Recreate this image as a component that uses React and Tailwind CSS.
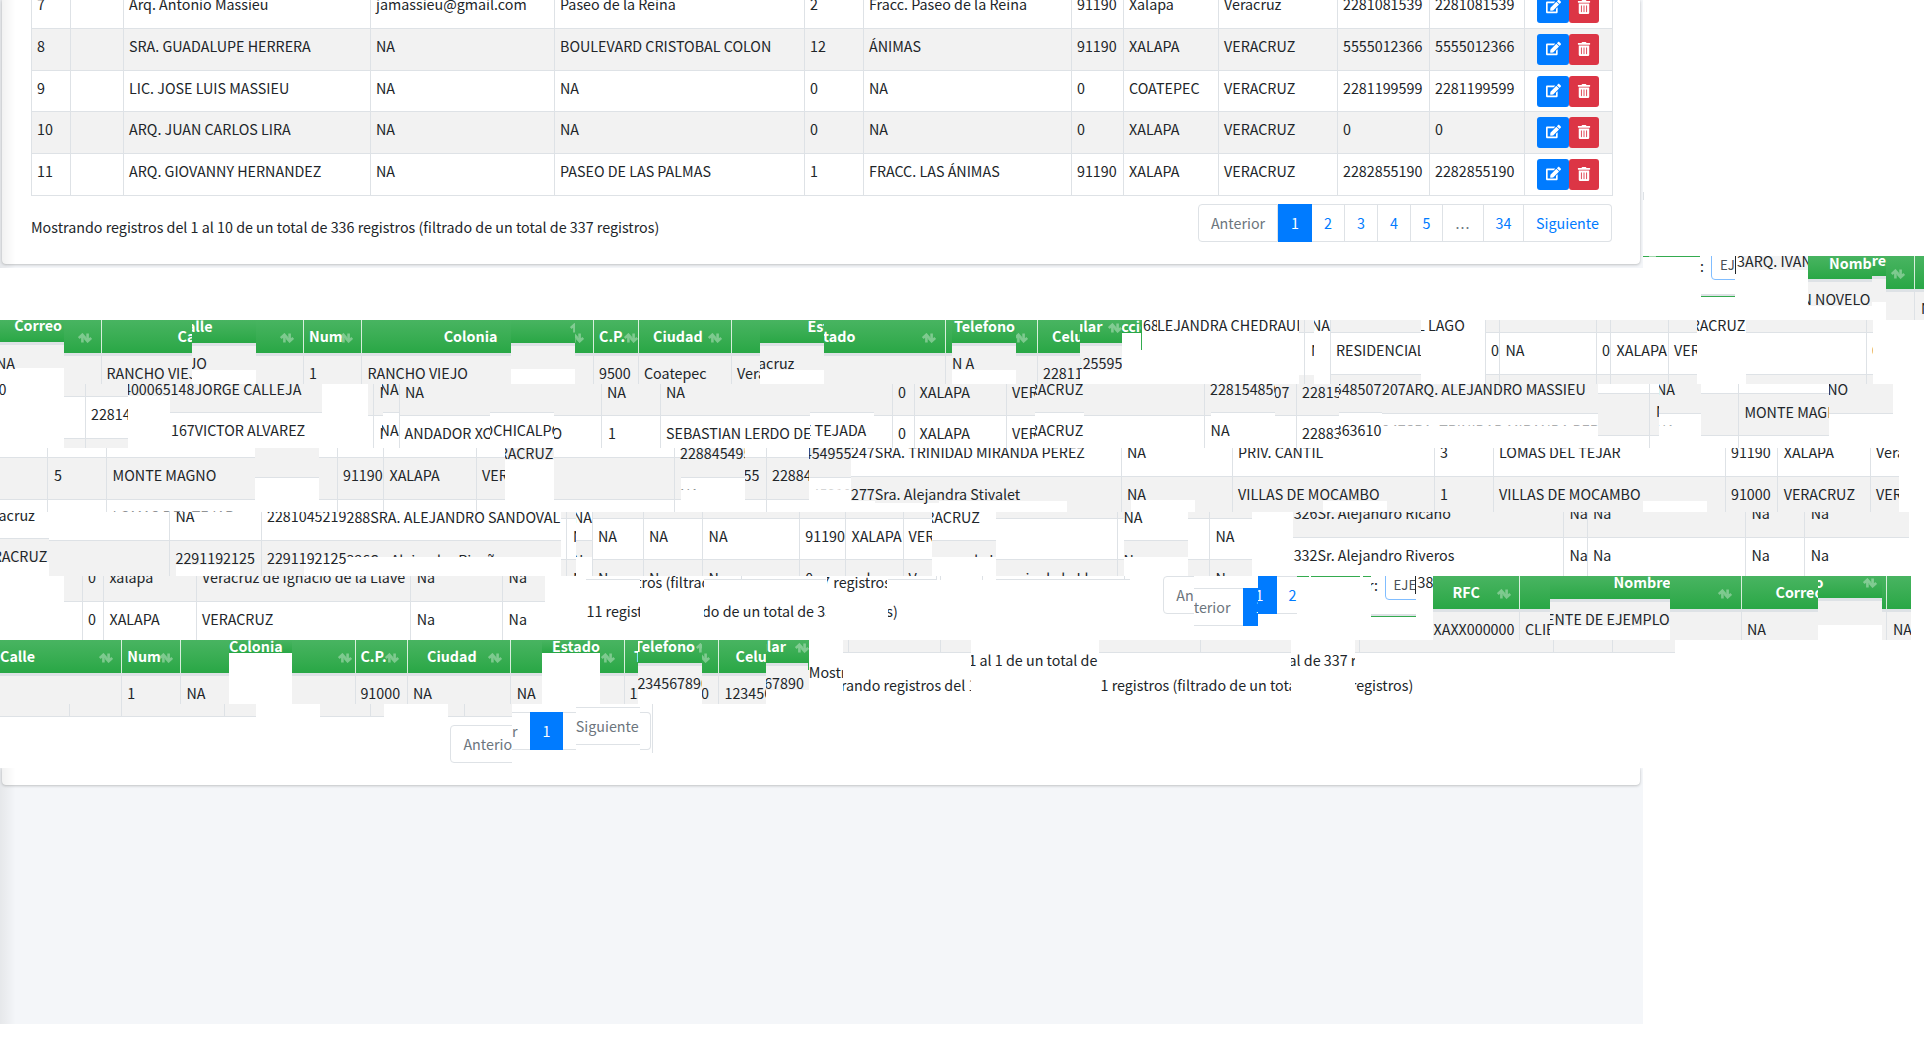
import React from "react";
import { FaEdit, FaTrashAlt } from "react-icons/fa";

const F = "bg-[#f2f2f2]";
const L = "bg-[#dee2e6]";
const W = "bg-white";
const G = "bg-linear-to-b from-[#48b461] to-[#28a745]";
const BLUE = "bg-[#007bff]";
const GL = "bg-[#34ab4f]";

/* ---------- free-canvas primitives ---------- */

const box = (x1, x2, y1, y2, cls) => ({ k: "box", x1, x2, y1, y2, cls });

/* vertical stack of fills: stack(x1, x2, top, fill, bottom, fill, bottom ...) */
const stack = (x1, x2, top, ...rest) => {
  const out = [];
  let y = top;
  for (let i = 0; i < rest.length; i += 2) {
    out.push(box(x1, x2, y, rest[i + 1], rest[i]));
    y = rest[i + 1];
  }
  return out;
};
const cols = (y1, y2, cls, ...xs) => xs.map((x) => box(x, x + 1, y1, y2, cls));
const txt = (x, y, s, clip = {}, cls = "text-[#212529]") => ({ k: "txt", x, y, s, clip, cls });
const head = (x, y, s, clip = {}) => txt(x, y - 0.5, s, clip, "font-bold text-white");
const sort = (x, y, clip = {}) => ({ k: "sort", x, y, clip });

function SortIcon() {
  return (
    <svg viewBox="0 0 14 10" className="block h-[10px] w-[14px] opacity-35" fill="none" stroke="white" strokeWidth="2.6">
      <path d="M4.4 9.5V1.5M0.8 5L4.4 1.7L7.4 5" />
      <path d="M9.6 0.5V8.5M6.6 5L9.6 8.3L13.2 5" />
    </svg>
  );
}

function Clipped({ item, band, children, top }) {
  const { l = item.x - 2, r = 1930, t = band.y, b = band.y + band.h } = item.clip;
  return (
    <div
      className="absolute overflow-hidden"
      style={{ left: l - band.x, top: t - band.y, width: r - l, height: b - t }}
    >
      <div className="absolute" style={{ left: item.x - l, top: top - t }}>
        {children}
      </div>
    </div>
  );
}

function Band({ x = 0, y, h = 64, items }) {
  const band = { x, y, h };
  return (
    <div className="relative overflow-hidden bg-white" style={{ height: h }}>
      {items.flat(3).map((it, i) => {
        if (it.k === "box")
          return (
            <div
              key={i}
              className={"absolute " + it.cls}
              style={{ left: it.x1 - x, top: it.y1 - y, width: it.x2 - it.x1, height: it.y2 - it.y1 }}
            />
          );
        if (it.k === "sort")
          return (
            <Clipped key={i} item={it} band={band} top={it.y - 5}>
              <SortIcon />
            </Clipped>
          );
        return (
          <Clipped key={i} item={it} band={band} top={it.y - 11}>
            <span className={"block whitespace-pre leading-5 " + it.cls}>{it.s}</span>
          </Clipped>
        );
      })}
    </div>
  );
}

/* ---------- main table ---------- */

const ROWS = [
  ["7", "", "Arq. Antonio Massieu", "jamassieu@gmail.com", "Paseo de la Reina", "2", "Fracc. Paseo de la Reina", "91190", "Xalapa", "Veracruz", "2281081539", "2281081539"],
  ["8", "", "SRA. GUADALUPE HERRERA", "NA", "BOULEVARD CRISTOBAL COLON", "12", "ÁNIMAS", "91190", "XALAPA", "VERACRUZ", "5555012366", "5555012366"],
  ["9", "", "LIC. JOSE LUIS MASSIEU", "NA", "NA", "0", "NA", "0", "COATEPEC", "VERACRUZ", "2281199599", "2281199599"],
  ["10", "", "ARQ. JUAN CARLOS LIRA", "NA", "NA", "0", "NA", "0", "XALAPA", "VERACRUZ", "0", "0"],
  ["11", "", "ARQ. GIOVANNY HERNANDEZ", "NA", "PASEO DE LAS PALMAS", "1", "FRACC. LAS ÁNIMAS", "91190", "XALAPA", "VERACRUZ", "2282855190", "2282855190"],
];

function MainTable() {
  return (
    <div className="-mt-[13px] ml-[29px] grid w-[1582px] grid-rows-[42px_42px_41px_42px_42px] border-l border-[#dee2e6]">
      {ROWS.map((r, i) => (
        <div
          key={r[0]}
          className={
            "grid grid-cols-[39px_53px_247px_184px_250px_59px_208px_52px_95px_119px_92px_95px_88px] border-b border-[#dee2e6] " +
            (i % 2 ? "bg-[#f2f2f2]" : "bg-white")
          }
        >
          {r.map((c, j) => (
            <div key={j} className="whitespace-nowrap border-r border-[#dee2e6] pl-[5px] pt-[7px] leading-5">
              {c}
            </div>
          ))}
          <div className="flex border-r border-[#dee2e6] pl-[12px] pt-[5px]">
            <span className="flex h-[31px] w-[32px] items-center justify-center rounded-[3px] bg-[#007bff] pb-[2px] text-white">
              <FaEdit size={15} />
            </span>
            <span className="flex h-[31px] w-[30px] items-center justify-center rounded-[3px] bg-[#dc3545] pb-[2px] text-white">
              <FaTrashAlt size={14} />
            </span>
          </div>
        </div>
      ))}
    </div>
  );
}

function Pagination() {
  const cell = "flex h-[38px] items-center justify-center border-y border-r border-[#dee2e6] ";
  const link = cell + "text-[#007bff]";
  const mute = cell + "text-[#6c757d]";
  return (
    <div className="flex">
      <span className={mute + " w-[80px] rounded-l border-l"}>Anterior</span>
      <span className="flex h-[38px] w-[34px] items-center justify-center bg-[#007bff] text-white">1</span>
      <span className={link + " w-[33px]"}>2</span>
      <span className={link + " w-[33px]"}>3</span>
      <span className={link + " w-[33px]"}>4</span>
      <span className={link + " w-[32px]"}>5</span>
      <span className={mute + " w-[41px] tracking-[1px]"}>...</span>
      <span className={link + " w-[40px]"}>34</span>
      <span className={link + " w-[88px] rounded-r"}>Siguiente</span>
    </div>
  );
}

/* ---------- fragment data ---------- */

const FIELD = "text-[13.2px] text-[#495057]";

const band1 = [
  box(1643, 1644, 192, 200, L),
  box(1643, 1700, 256, 257, GL),
  box(1649, 1656, 256, 257, "bg-[#a3d9af]"),
  txt(1700, 267, ":", { l: 1699 }),
  box(1711, 1745, 240, 280, "rounded border border-[#80bdff] bg-white"),
  box(1735, 1750, 240, 281, W),
  box(1640, 1930, 190, 192, W),
  box(1701, 1735, 294, 296, L),
  box(1701, 1735, 296, 297, GL),
  box(1700, 1808, 230, 256, W),
  box(1743, 1808, 256, 270, F),
  txt(1720, 266, "EJ", { r: 1735 }, FIELD),
  box(1735, 1736, 256, 274, "bg-[#212529]"),
  txt(1737, 262, "3ARQ. IVAN", { r: 1808, t: 256 }),
  stack(1808, 1872, 256, G, 279, L, 282, F, 306),
  stack(1872, 1886, 256, G, 276, L, 279, F, 302),
  stack(1886, 1924, 256, G, 289, L, 292, F, 320),
  cols(256, 289, "bg-white/80", 1914),
  cols(292, 320, L, 1914),
  head(1829, 264, "Nombre", { r: 1872 }),
  head(1829, 261, "Nombre", { l: 1872, t: 256 }),
  sort(1891, 274),
  txt(1801.5, 300, "N NOVELO", { l: 1808 }),
  txt(1921, 309, "NA", { r: 1924 }),
];

const band2 = [
  stack(0, 64, 320, G, 342, L, 345, F, 368),
  stack(64, 1080, 320, G, 353, L, 356, F, 384),
  cols(320, 353, "bg-white/80", 101, 303, 361, 593, 638, 731, 945, 1037),
  cols(356, 384, L, 101, 303, 361, 593, 638, 731, 945, 1037),
  stack(192, 256, 320, G, 343, L, 346, F, 370, W, 384),
  stack(511, 575, 320, G, 343, L, 346, F, 369, W, 384),
  stack(760, 824, 320, G, 343, L, 346, F, 370, W, 384),
  stack(952, 1016, 320, G, 343, L, 346, F, 370, W, 384),
  stack(1080, 1122, 320, G, 343, L, 346, F, 370, W, 384),
  box(1122, 1142, 320, 333, G),
  box(1141, 1142, 333, 350, GL),
  head(14.2, 326.5, "Correo", { r: 64 }),
  sort(78, 338),
  head(177.5, 337.5, "Calle", { r: 192 }),
  head(177.5, 327.5, "Calle", { l: 192 }),
  sort(280, 338),
  head(309, 337.5, "Num"),
  sort(339, 338),
  head(443.7, 337.5, "Colonia"),
  sort(570, 328, { r: 575 }),
  sort(570, 338, { l: 575 }),
  head(599, 337.5, "C.P."),
  sort(624, 338),
  head(653, 337.5, "Ciudad"),
  sort(708, 338),
  head(807.5, 327.5, "Estado", { r: 824 }),
  head(807.5, 337.5, "Estado", { l: 824 }),
  sort(922, 338),
  head(954, 327.5, "Telefono", { r: 1016 }),
  sort(1014, 338, { l: 1016 }),
  head(1052, 337.5, "Celular", { r: 1080 }),
  head(1052, 327.5, "Celular", { l: 1080, r: 1122 }),
  sort(1108, 328, { r: 1122 }),
  head(1112, 327.5, "Accion", { l: 1122, r: 1141 }),
  txt(-4, 363.5, "NA", { l: 0 }),
  txt(106.5, 374, "RANCHO VIEJO", { r: 192 }),
  txt(106.5, 364, "RANCHO VIEJO", { l: 192 }),
  txt(309, 374, "1"),
  txt(367.5, 374, "RANCHO VIEJO"),
  txt(599, 374, "9500"),
  txt(644, 374, "Coatepec"),
  txt(737, 374, "Veracruz", { r: 760 }),
  txt(737, 364, "Veracruz", { l: 760 }),
  txt(952, 364, "N A"),
  txt(1043, 374, "2281125595", { r: 1080 }),
  txt(1043, 364, "2281125595", { l: 1080, r: 1122 }),
  stack(1299, 1314, 320, F, 332, L, 333, W, 375, F, 384),
  cols(320, 384, L, 1304),
  stack(1331, 1421, 320, F, 332, L, 333, W, 374, L, 375, F, 384),
  stack(1486, 1697, 320, F, 332, L, 333, W, 374, L, 375, F, 384),
  stack(1746, 1873, 320, F, 332, L, 333, W, 374, L, 375, F, 384),
  cols(320, 384, L, 1330, 1485, 1499, 1596, 1610, 1668, 1866),
  txt(1143, 326, "68", { r: 1157 }),
  txt(1157, 326, "LEJANDRA CHEDRAUI", { r: 1299, l: 1156 }),
  txt(1311, 326, "NA", { l: 1314 }),
  txt(1311, 351, "NA", { l: 1310, r: 1314 }),
  txt(1336, 351, "RESIDENCIAL", { r: 1421 }),
  txt(1417, 326, "L LAGO", { l: 1421 }),
  txt(1491, 351, "0"),
  txt(1505.5, 351, "NA"),
  txt(1602, 351, "0"),
  txt(1616.6, 351, "XALAPA"),
  txt(1674, 351, "VERACRUZ", { r: 1697 }),
  txt(1674, 326, "VERACRUZ", { l: 1697 }),
  txt(1872, 351, "0", { r: 1873 }),
];

const band3 = [
  stack(64, 128, 384, F, 396, L, 397, W, 438, L, 439, F, 448),
  cols(384, 448, L, 85),
  box(128, 170, 384, 396, F),
  stack(170, 322, 384, F, 412, L, 413),
  stack(368, 383, 384, F, 415, L, 416),
  stack(383, 399, 384, F, 412, L, 413),
  cols(384, 448, L, 373),
  stack(399, 1397, 384, F, 415, L, 416),
  stack(490, 554, 384, F, 412, L, 413, W, 420),
  stack(810, 874, 384, F, 412, L, 413, W, 420),
  stack(1035, 1084, 384, F, 412, L, 413, W, 420),
  stack(1211, 1275, 384, F, 412, L, 413, W, 420),
  cols(384, 448, L, 399, 601, 660, 892, 914, 1006, 1204, 1296),
  box(1339, 1382, 384, 448, W),
  stack(1339, 1382, 384, F, 412, L, 413),
  stack(1382, 1598, 384, F, 413, L, 414, W, 448),
  stack(1598, 1659, 384, W, 393, L, 394, F, 435, L, 436, W, 448),
  cols(384, 448, L, 1649),
  stack(1659, 1701, 384, F, 413, L, 414, W, 448),
  stack(1701, 1829, 384, W, 393, L, 394, F, 435, L, 436, W, 448),
  cols(384, 448, L, 1738),
  stack(1829, 1893, 384, F, 413, L, 414, W, 448),
  txt(-1.5, 390, "0", { l: 0 }),
  txt(91, 415, "2281400065", { r: 128 }),
  txt(123, 390, "400065148JORGE CALLEJA", { l: 128 }),
  txt(171, 431, "167VICTOR ALVAREZ"),
  txt(379.6, 393, "NA", { r: 383 }),
  txt(379.6, 390, "NA", { l: 382 }),
  txt(379.6, 434, "NA", { r: 383 }),
  txt(379.6, 431, "NA", { l: 382 }),
  txt(405, 393, "NA"),
  txt(404.5, 434, "ANDADOR XOCHICALPO", { r: 490 }),
  txt(404.5, 431, "ANDADOR XOCHICALPO", { l: 490, r: 554 }),
  txt(404.5, 434, "ANDADOR XOCHICALPO", { l: 554 }),
  txt(607, 393, "NA"),
  txt(608, 434, "1"),
  txt(666, 393, "NA"),
  txt(666, 434, "SEBASTIAN LERDO DE TEJADA", { r: 810 }),
  txt(666, 431, "SEBASTIAN LERDO DE TEJADA", { l: 810 }),
  txt(898, 393, "0"),
  txt(898, 434, "0"),
  txt(919.6, 393, "XALAPA"),
  txt(919.6, 434, "XALAPA"),
  txt(1012, 393, "VERACRUZ", { r: 1035 }),
  txt(1012, 434, "VERACRUZ", { r: 1035 }),
  txt(1012, 390, "VERACRUZ", { l: 1035 }),
  txt(1012, 431, "VERACRUZ", { l: 1035 }),
  txt(1210, 390, "2281548507", { r: 1275 }),
  txt(1210, 393, "2281548507", { l: 1275 }),
  txt(1210.6, 431, "NA"),
  txt(1302, 393, "2281548507", { r: 1339 }),
  txt(1302, 434, "2288363610", { r: 1339 }),
  txt(1302, 390, "2281548507", { l: 1339, r: 1382 }),
  txt(1302, 431, "2288363610", { l: 1339, r: 1382 }),
  txt(1382, 390, "207ARQ. ALEJANDRO MASSIEU"),
  txt(1382, 431, "247SRA. TRINIDAD MIRANDA PEREZ", { r: 1598, b: 425.5 }, "text-[#212529]/40"),
  txt(1656, 412, "NA", { r: 1659 }),
  txt(1656, 390, "NA", { l: 1659 }),
  txt(1656, 431, "NA", { l: 1659, b: 425.5 }, "text-[#212529]/40"),
  txt(1744.4, 412.5, "MONTE MAGNO", { r: 1829 }),
  txt(1744.4, 390, "MONTE MAGNO", { l: 1829 }),
];

const band4 = [
  stack(0, 809, 448, W, 457, L, 458, F, 499, L, 500, W, 512),
  cols(448, 512, L, 47, 106, 337, 383, 476, 674, 766),
  stack(255, 319, 448, F, 477, L, 478, W, 512),
  stack(505, 554, 448, F, 460, W, 512),
  stack(681, 745, 448, F, 477, L, 478, W, 512),
  stack(809, 851, 448, F, 477, L, 478, W, 512),
  stack(851, 1899, 448, W, 476, L, 477, F, 512),
  cols(448, 512, L, 1121, 1232, 1434, 1493, 1725, 1777, 1870),
  box(875, 939, 503, 512, W),
  box(851, 875, 501, 512, W),
  box(939, 1067, 501, 512, W),
  box(1131, 1195, 500, 512, W),
  box(1323, 1387, 501, 512, W),
  box(1643, 1707, 501, 512, W),
  txt(54, 476, "5"),
  txt(54, 518, "1", {}, "text-[#212529]/50"),
  txt(112.6, 476, "MONTE MAGNO"),
  txt(112.6, 517, "LOMAS DEL TEJAR", {}, "text-[#212529]/50"),
  txt(343, 476, "91190"),
  txt(389.4, 476, "XALAPA"),
  txt(482, 476, "VERACRUZ", { r: 505 }),
  txt(482, 454, "VERACRUZ", { l: 505, r: 554 }),
  txt(680, 454, "2288454955", { r: 745 }),
  txt(680, 476, "2288454955", { l: 745 }),
  txt(680, 495, "NA", { r: 745, b: 490 }, "text-[#212529]/50"),
  txt(772, 476, "2288454955", { r: 809 }),
  txt(772, 454, "2288454955", { l: 809, r: 851 }),
  txt(772, 495, "2281045219", { l: 815, r: 851, b: 490 }, "text-[#212529]/20"),
  txt(851, 453, "247SRA. TRINIDAD MIRANDA PEREZ"),
  txt(851, 495, "277Sra. Alejandra Stivalet"),
  txt(1127, 453, "NA"),
  txt(1127, 495, "NA"),
  txt(1238, 453, "PRIV. CANTIL"),
  txt(1238, 495, "VILLAS DE MOCAMBO"),
  txt(1440, 453, "3"),
  txt(1440, 495, "1"),
  txt(1499, 453, "LOMAS DEL TEJAR"),
  txt(1499, 495, "VILLAS DE MOCAMBO"),
  txt(1731, 453, "91190"),
  txt(1731, 495, "91000"),
  txt(1783.7, 453, "XALAPA"),
  txt(1783.7, 495, "VERACRUZ"),
  txt(1876, 453, "Veracruz", { r: 1899 }),
  txt(1876, 495, "VERACRUZ", { r: 1899 }),
];

const band5 = [
  stack(0, 49, 512, W, 538, L, 539, F, 562),
  stack(49, 561, 512, W, 540, L, 541, F, 576),
  cols(512, 576, L, 169, 261),
  box(176, 240, 565, 576, W),
  box(304, 561, 557, 576, W),
  stack(561, 576, 512, F, 518, L, 519, W, 559, L, 560, F, 576),
  cols(512, 576, L, 566),
  stack(576, 592, 512, W, 540, L, 541, F, 557),
  stack(592, 932, 512, F, 518, L, 519, W, 559, L, 560, F, 576),
  cols(512, 576, L, 592, 643, 702, 799, 845, 903),
  stack(932, 996, 512, W, 540, L, 541, F, 557),
  stack(996, 1124, 512, F, 518, L, 519, W, 559, L, 560, F, 576),
  cols(512, 576, L, 1117),
  stack(1124, 1188, 512, W, 540, L, 541, F, 557),
  stack(1188, 1252, 512, F, 518, L, 519, W, 559, L, 560, F, 576),
  cols(512, 576, L, 1209),
  stack(1293, 1909, 512, F, 537, L, 538, W, 576),
  cols(512, 576, L, 1563, 1587, 1745, 1804),
  txt(-22.5, 515.5, "Veracruz", { l: 0 }),
  txt(-24, 557, "VERACRUZ", { l: 0, r: 49 }),
  txt(175.5, 517, "NA"),
  txt(175.5, 559, "2291192125"),
  txt(267, 517, "2281045219"),
  txt(267, 559, "2291192125"),
  txt(346.5, 518, "288SRA. ALEJANDRO SANDOVAL"),
  txt(346.5, 560.5, "326Sr. Alejandro Ricaño", { b: 557 }),
  txt(573, 537, "NA", { r: 576 }),
  txt(573, 579, "Na", { r: 576 }),
  txt(573, 518, "NA", { l: 576 }),
  txt(573, 560.5, "Na", { l: 576, b: 557 }),
  txt(598, 537, "NA"),
  txt(649, 537, "NA"),
  txt(708.6, 537, "NA"),
  txt(805.3, 537, "91190"),
  txt(851.4, 537, "XALAPA"),
  txt(908.6, 537, "VERACRUZ", { r: 932 }),
  txt(908.6, 518, "VERACRUZ", { l: 932 }),
  txt(598, 579, "Na"),
  txt(649, 579, "Na"),
  txt(708.6, 579, "Na"),
  txt(805.3, 579, "0"),
  txt(851.4, 579, "xalapa"),
  txt(908.6, 579, "Veracruz de Ignacio de la Llave", { r: 932 }),
  txt(908.6, 560.5, "Veracruz de Ignacio de la Llave", { l: 932, r: 996, b: 557 }),
  txt(908.6, 579, "Veracruz de Ignacio de la Llave", { l: 996 }),
  txt(1123.5, 518, "NA"),
  txt(1123.5, 560.5, "Na", { b: 557 }),
  txt(1215.5, 537, "NA"),
  txt(1215.5, 579, "Na"),
  txt(1293.7, 514, "326Sr. Alejandro Ricaño"),
  txt(1293.7, 556, "332Sr. Alejandro Riveros"),
  txt(1569.4, 514, "Na"),
  txt(1569.4, 556, "Na"),
  txt(1593, 514, "Na"),
  txt(1593, 556, "Na"),
  txt(1751.4, 514, "Na"),
  txt(1751.4, 556, "Na"),
  txt(1810.7, 514, "Na"),
  txt(1810.7, 556, "Na"),
];

const FOOT = "11 registros (filtrado de un total de 337 registros)";
const GREY = "text-[#6c757d]";

const band6 = [
  stack(64, 545, 576, F, 601, L, 602, W, 640),
  cols(576, 640, L, 82, 103, 196, 410, 502),
  txt(88, 578, "0"),
  txt(109.4, 578, "xalapa"),
  txt(202, 578, "Veracruz de Ignacio de la Llave"),
  txt(416.7, 578, "Na"),
  txt(508.6, 578, "Na"),
  txt(88, 620, "0"),
  txt(109.4, 620, "XALAPA"),
  txt(202, 620, "VERACRUZ"),
  txt(416.7, 620, "Na"),
  txt(508.6, 620, "Na"),
  box(586, 640, 579, 580, L),
  box(704, 826, 579, 580, L),
  box(888, 936, 579, 580, L),
  box(996, 1130, 579, 580, L),
  cols(576, 580, L, 741, 936, 940, 982, 1124),
  txt(586.5, 612, FOOT, { r: 640 }),
  txt(585.5, 583, FOOT, { l: 640, r: 704 }),
  txt(586, 612, FOOT, { l: 704, r: 826 }),
  txt(575, 583, FOOT, { l: 827, r: 887 }),
  txt(577, 612, FOOT, { l: 888 }),
  box(1163, 1200, 576, 614, "rounded-l border border-[#dee2e6]"),
  box(1194, 1243, 576, 640, W),
  box(1194, 1243, 588, 589, L),
  box(1194, 1243, 625, 626, L),
  box(1243, 1258, 588, 626, BLUE),
  box(1258, 1277, 576, 614, BLUE),
  box(1277, 1297, 576, 577, L),
  box(1277, 1297, 613, 614, L),
  txt(1176.3, 596, "Anterior", { r: 1194 }, GREY),
  txt(1176.3, 608, "Anterior", { l: 1194, r: 1243 }, GREY),
  txt(1255.5, 596, "1", { l: 1258 }, "text-white"),
  txt(1255.5, 608, "1", { r: 1258 }, "text-white"),
  txt(1288.5, 596, "2", { r: 1297 }, "text-[#007bff]"),
  box(1297, 1371, 576, 577, GL),
  box(1309, 1311, 576, 577, W),
  box(1360, 1363, 576, 577, W),
  txt(1368, 586, "r:", { l: 1371 }),
  box(1385, 1430, 560, 600, "rounded border border-[#80bdff] bg-white"),
  box(1416, 1433, 576, 602, W),
  txt(1393.6, 586, "EJE", { r: 1416 }, FIELD),
  box(1415, 1416, 576, 594, "bg-[#212529]"),
  box(1371, 1416, 614, 616, L),
  box(1371, 1416, 616, 617, GL),
  txt(1417.6, 582.5, "38", { r: 1433 }),
  stack(1433, 1911, 576, G, 609, L, 612, F, 640),
  cols(576, 609, "bg-white/80", 1519, 1741, 1886),
  cols(612, 640, L, 1519, 1741, 1886),
  stack(1550, 1670, 576, G, 599, L, 602, F, 626, W, 640),
  stack(1818, 1882, 576, G, 598, L, 601, F, 625, W, 640),
  head(1452.5, 593.5, "RFC"),
  sort(1497, 594),
  head(1613.5, 583.5, "Nombre", { r: 1670 }),
  sort(1718, 594),
  head(1775.5, 593.5, "Correo", { r: 1818 }),
  head(1775.5, 583.5, "Correo", { l: 1818 }),
  sort(1863, 583),
  txt(1433.4, 629.5, "XAXX000000"),
  txt(1525, 629.5, "CLIENTE DE EJEMPLO", { r: 1550 }),
  txt(1525, 620, "CLIENTE DE EJEMPLO", { l: 1550, r: 1670 }),
  txt(1747, 629.5, "NA"),
  txt(1893, 629.5, "NA", { r: 1911 }),
];

const INFO = "Mostrando registros del 1 al 1 de un total de 1 registros (filtrado de un total de 337 registros)";

const band7 = [
  stack(0, 766, 640, G, 673, L, 676, F, 704),
  cols(640, 673, "bg-white/80", 121, 180, 355, 407, 510, 624, 718),
  cols(676, 704, L, 121, 180, 355, 407, 510, 624, 718),
  stack(229, 292, 640, G, 653, W, 704),
  stack(542, 600, 640, G, 653, W, 704),
  stack(638, 702, 640, G, 663, L, 666, F, 690, W, 704),
  stack(766, 809, 640, G, 663, L, 666, F, 690, W, 704),
  box(808, 809, 663, 670, GL),
  head(0, 657.5, "Calle"),
  sort(99, 658),
  head(127.3, 657.5, "Num"),
  sort(159, 658),
  head(229, 647.5, "Colonia"),
  sort(338, 658),
  head(360.4, 657.5, "C.P."),
  sort(385, 658),
  head(427, 657.5, "Ciudad"),
  sort(488, 658),
  head(552, 647.5, "Estado"),
  sort(601, 658),
  head(634, 657.5, "Telefono", { r: 638 }),
  head(634, 647.5, "Telefono", { l: 638, r: 702 }),
  sort(696, 648, { r: 702 }),
  sort(696, 658, { l: 702 }),
  head(735.5, 657.5, "Celular", { r: 766 }),
  head(735.5, 647.5, "Celular", { l: 766 }),
  sort(795, 648),
  txt(127.3, 694, "1"),
  txt(186.5, 694, "NA"),
  txt(360.4, 694, "91000"),
  txt(413, 694, "NA"),
  txt(516.7, 694, "NA"),
  txt(629.5, 694, "1234567890", { r: 638 }),
  txt(629.5, 684, "1234567890", { l: 638, r: 702 }),
  txt(629.5, 694, "1234567890", { l: 702 }),
  txt(724.5, 694, "1234567890", { r: 766 }),
  txt(724.5, 684, "1234567890", { l: 766 }),
  stack(843, 971, 640, F, 652, L, 653),
  stack(1099, 1291, 640, F, 652, L, 653),
  stack(1355, 1675, 640, F, 652, L, 653),
  cols(640, 652, L, 848, 940, 1200, 1359, 1553, 1612),
  txt(808.8, 673, INFO, { r: 843 }),
  txt(808.8, 686, INFO, { l: 843, r: 971 }),
  txt(808.8, 661, INFO, { l: 971, r: 1099 }),
  txt(808.8, 686, INFO, { l: 1099, r: 1291 }),
  txt(808.8, 661, INFO, { l: 1291, r: 1355 }),
  txt(808.8, 686, INFO, { l: 1355 }),
];

const band8 = [
  stack(0, 512, 704, F, 716, L, 717),
  cols(704, 717, L, 69, 121, 224, 370, 464),
  box(256, 320, 704, 717, W),
  box(384, 448, 704, 717, W),
  box(450, 520, 725, 763, "rounded-l border border-[#dee2e6]"),
  box(512, 640, 704, 768, W),
  box(512, 576, 712, 713, L),
  box(512, 576, 749, 750, L),
  box(530, 563, 712, 750, BLUE),
  box(576, 640, 707, 708, L),
  box(576, 640, 744, 745, L),
  box(640, 651, 712, 750, "rounded-r border-y border-r border-[#dee2e6]"),
  box(652, 653, 704, 753, L),
  txt(463.4, 745, "Anterior", { r: 512 }, GREY),
  txt(463.4, 732, "Anterior", { l: 512 }, GREY),
  txt(542.5, 732, "1", {}, "text-white"),
  txt(575.8, 727, "Siguiente", {}, GREY),
];

const CARD_SHADOW = "shadow-[0_0_1px_rgba(0,0,0,0.125),0_1px_3px_rgba(0,0,0,0.2)]";

function SideShade() {
  return <div className="pointer-events-none absolute inset-y-0 left-0 w-[16px] bg-linear-to-r from-black/6 to-transparent" />;
}

export default function App() {
  return (
    <div className="h-[1050px] w-[1930px] overflow-hidden bg-white font-['Noto_Sans_CJK_SC','Noto_Sans',sans-serif] text-[14.31px] text-[#212529]">
      <div className="flex h-[320px]">
        <section className="relative h-[268px] w-[1643px] overflow-hidden bg-[#f4f6f9] pl-[2px]">
          <div className={"h-[264px] w-[1638px] overflow-hidden rounded-b bg-white " + CARD_SHADOW}>
            <MainTable />
            <div className="ml-[29px] mr-[28px] mt-[8px] flex items-start justify-between">
              <span className="pt-[13px] leading-5">
                Mostrando registros del 1 al 10 de un total de 336 registros (filtrado de un total de 337 registros)
              </span>
              <Pagination />
            </div>
          </div>
          <SideShade />
        </section>
        <aside className="w-[287px] pt-[190px]">
          <Band x={1643} y={190} h={130} items={band1} />
        </aside>
      </div>
      <Band y={320} items={band2} />
      <Band y={384} items={band3} />
      <Band y={448} items={band4} />
      <Band y={512} items={band5} />
      <Band y={576} items={band6} />
      <Band y={640} items={band7} />
      <Band y={704} items={band8} />
      <section className="relative h-[256px] w-[1643px] overflow-hidden bg-[#f4f6f9] pl-[2px]">
        <div className={"h-[17px] w-[1638px] rounded-b bg-white " + CARD_SHADOW} />
        <SideShade />
      </section>
    </div>
  );
}
